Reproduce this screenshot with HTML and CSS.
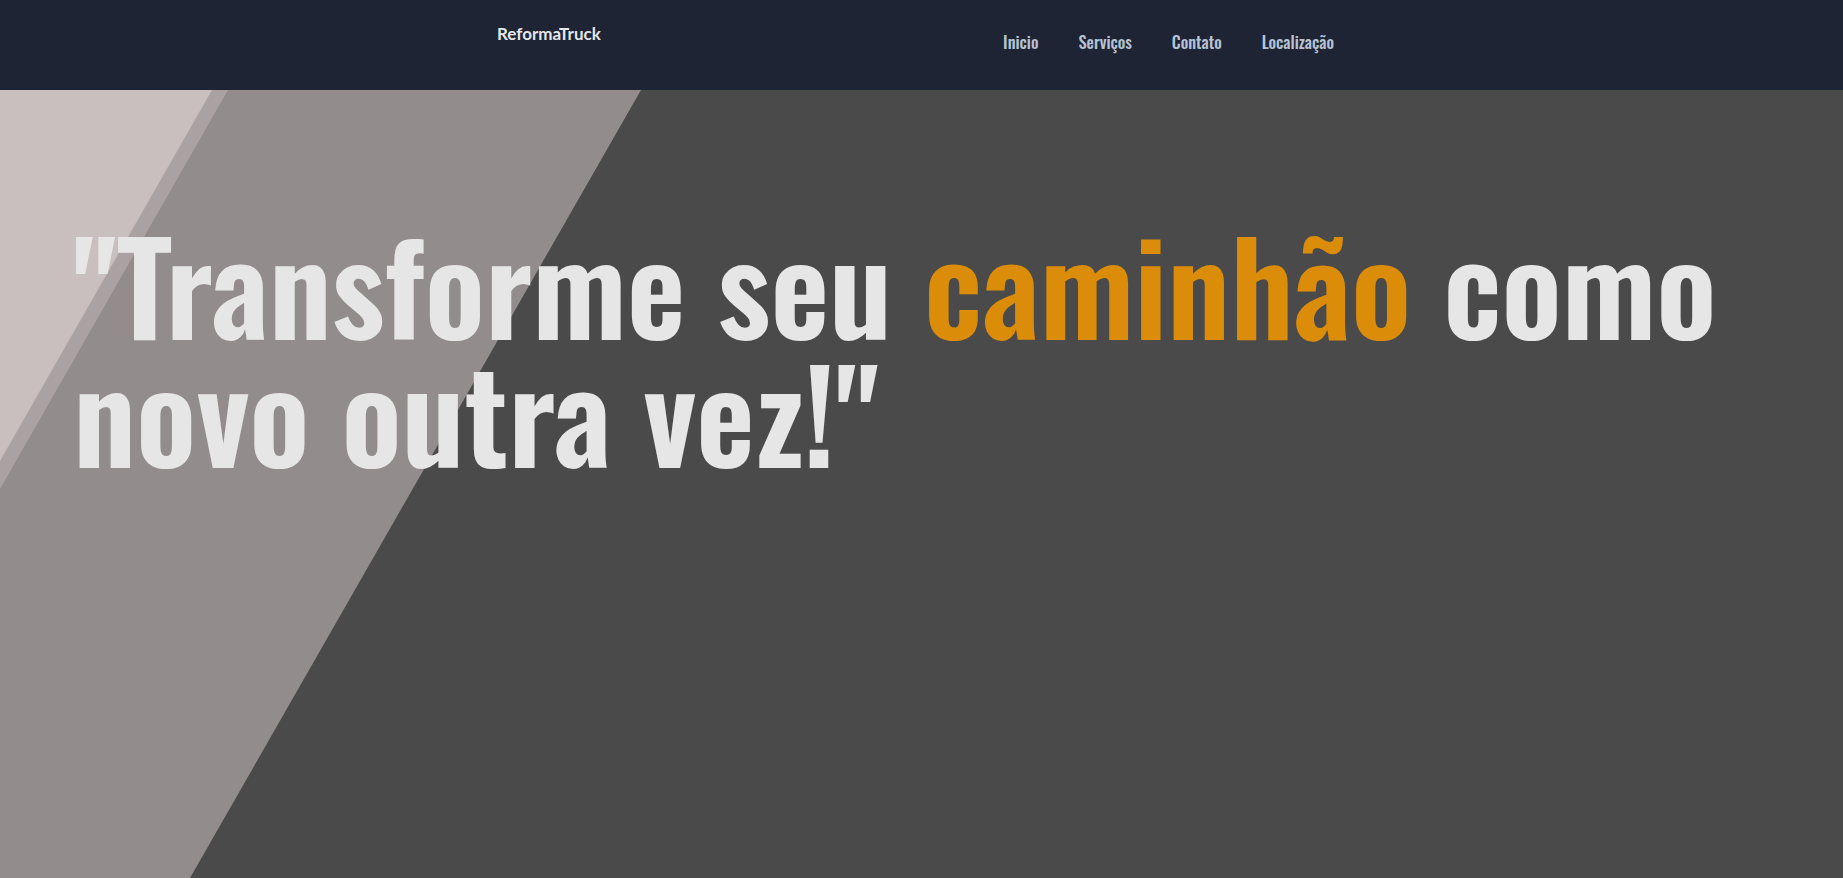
FILE: index.html
```html
<!DOCTYPE html>
<html lang="pt-BR">
<head>
<meta charset="utf-8">
<title>ReformaTruck</title>
<link rel="stylesheet" href="styles.css">
</head>
<body>
<header class="topbar">
  <div class="logo">ReformaTruck</div>
  <nav class="menu">
    <a class="menu-link" href="#">Inicio</a>
    <a class="menu-link" href="#">Serviços</a>
    <a class="menu-link" href="#">Contato</a>
    <a class="menu-link" href="#">Localização</a>
  </nav>
</header>
<section class="hero">
  <svg class="hero-bg" viewBox="0 0 1843 788" preserveAspectRatio="none" aria-hidden="true">
    <polygon points="0,0 641,0 190,788 0,788" fill="#928c8c"/>
    <polygon points="0,0 228,0 0,399" fill="#aaa2a2"/>
    <polygon points="0,0 212,0 0,371" fill="#c8bfbe"/>
  </svg>
  <h1 class="headline">"Transforme seu <span class="accent">caminhão</span> como<br>novo outra vez!"</h1>
</section>
</body>
</html>
```
FILE: styles.css
```css
* { box-sizing: border-box; }
html, body { margin: 0; padding: 0; }
body {
  background: #4a4a4a;
  font-family: "Lato", "Open Sans", sans-serif;
  overflow: hidden;
}
.topbar {
  height: 90px;
  background: #1e2433;
  display: flex;
  justify-content: space-between;
  align-items: flex-start;
  padding: 23px 489px 0 497px;
}
.logo {
  font-family: "Lato", sans-serif;
  font-weight: 700;
  font-size: 17px;
  color: #e4e6ea;
  line-height: normal;
}
.menu {
  display: flex;
  margin-top: 6px;
}
.menu-link {
  font-family: "Oswald", "Roboto Condensed", sans-serif;
  font-weight: 500;
  font-size: 16.5px;
  color: #b6c3d5;
  text-decoration: none;
  padding: 0 20px;
  line-height: 25px;
}
.hero {
  position: relative;
  height: 788px;
  background: #4a4a4a;
  padding: 128px 0 0 73px;
}
.hero-bg {
  position: absolute;
  inset: 0;
  width: 100%;
  height: 100%;
  display: block;
}
.headline {
  position: relative;
  margin: 0;
  font-family: "Oswald", "Roboto Condensed", sans-serif;
  font-weight: 600;
  font-size: 128px;
  line-height: 128px;
  color: #e6e6e6;
  white-space: nowrap;
}
.accent { color: #db8c09; }
```
